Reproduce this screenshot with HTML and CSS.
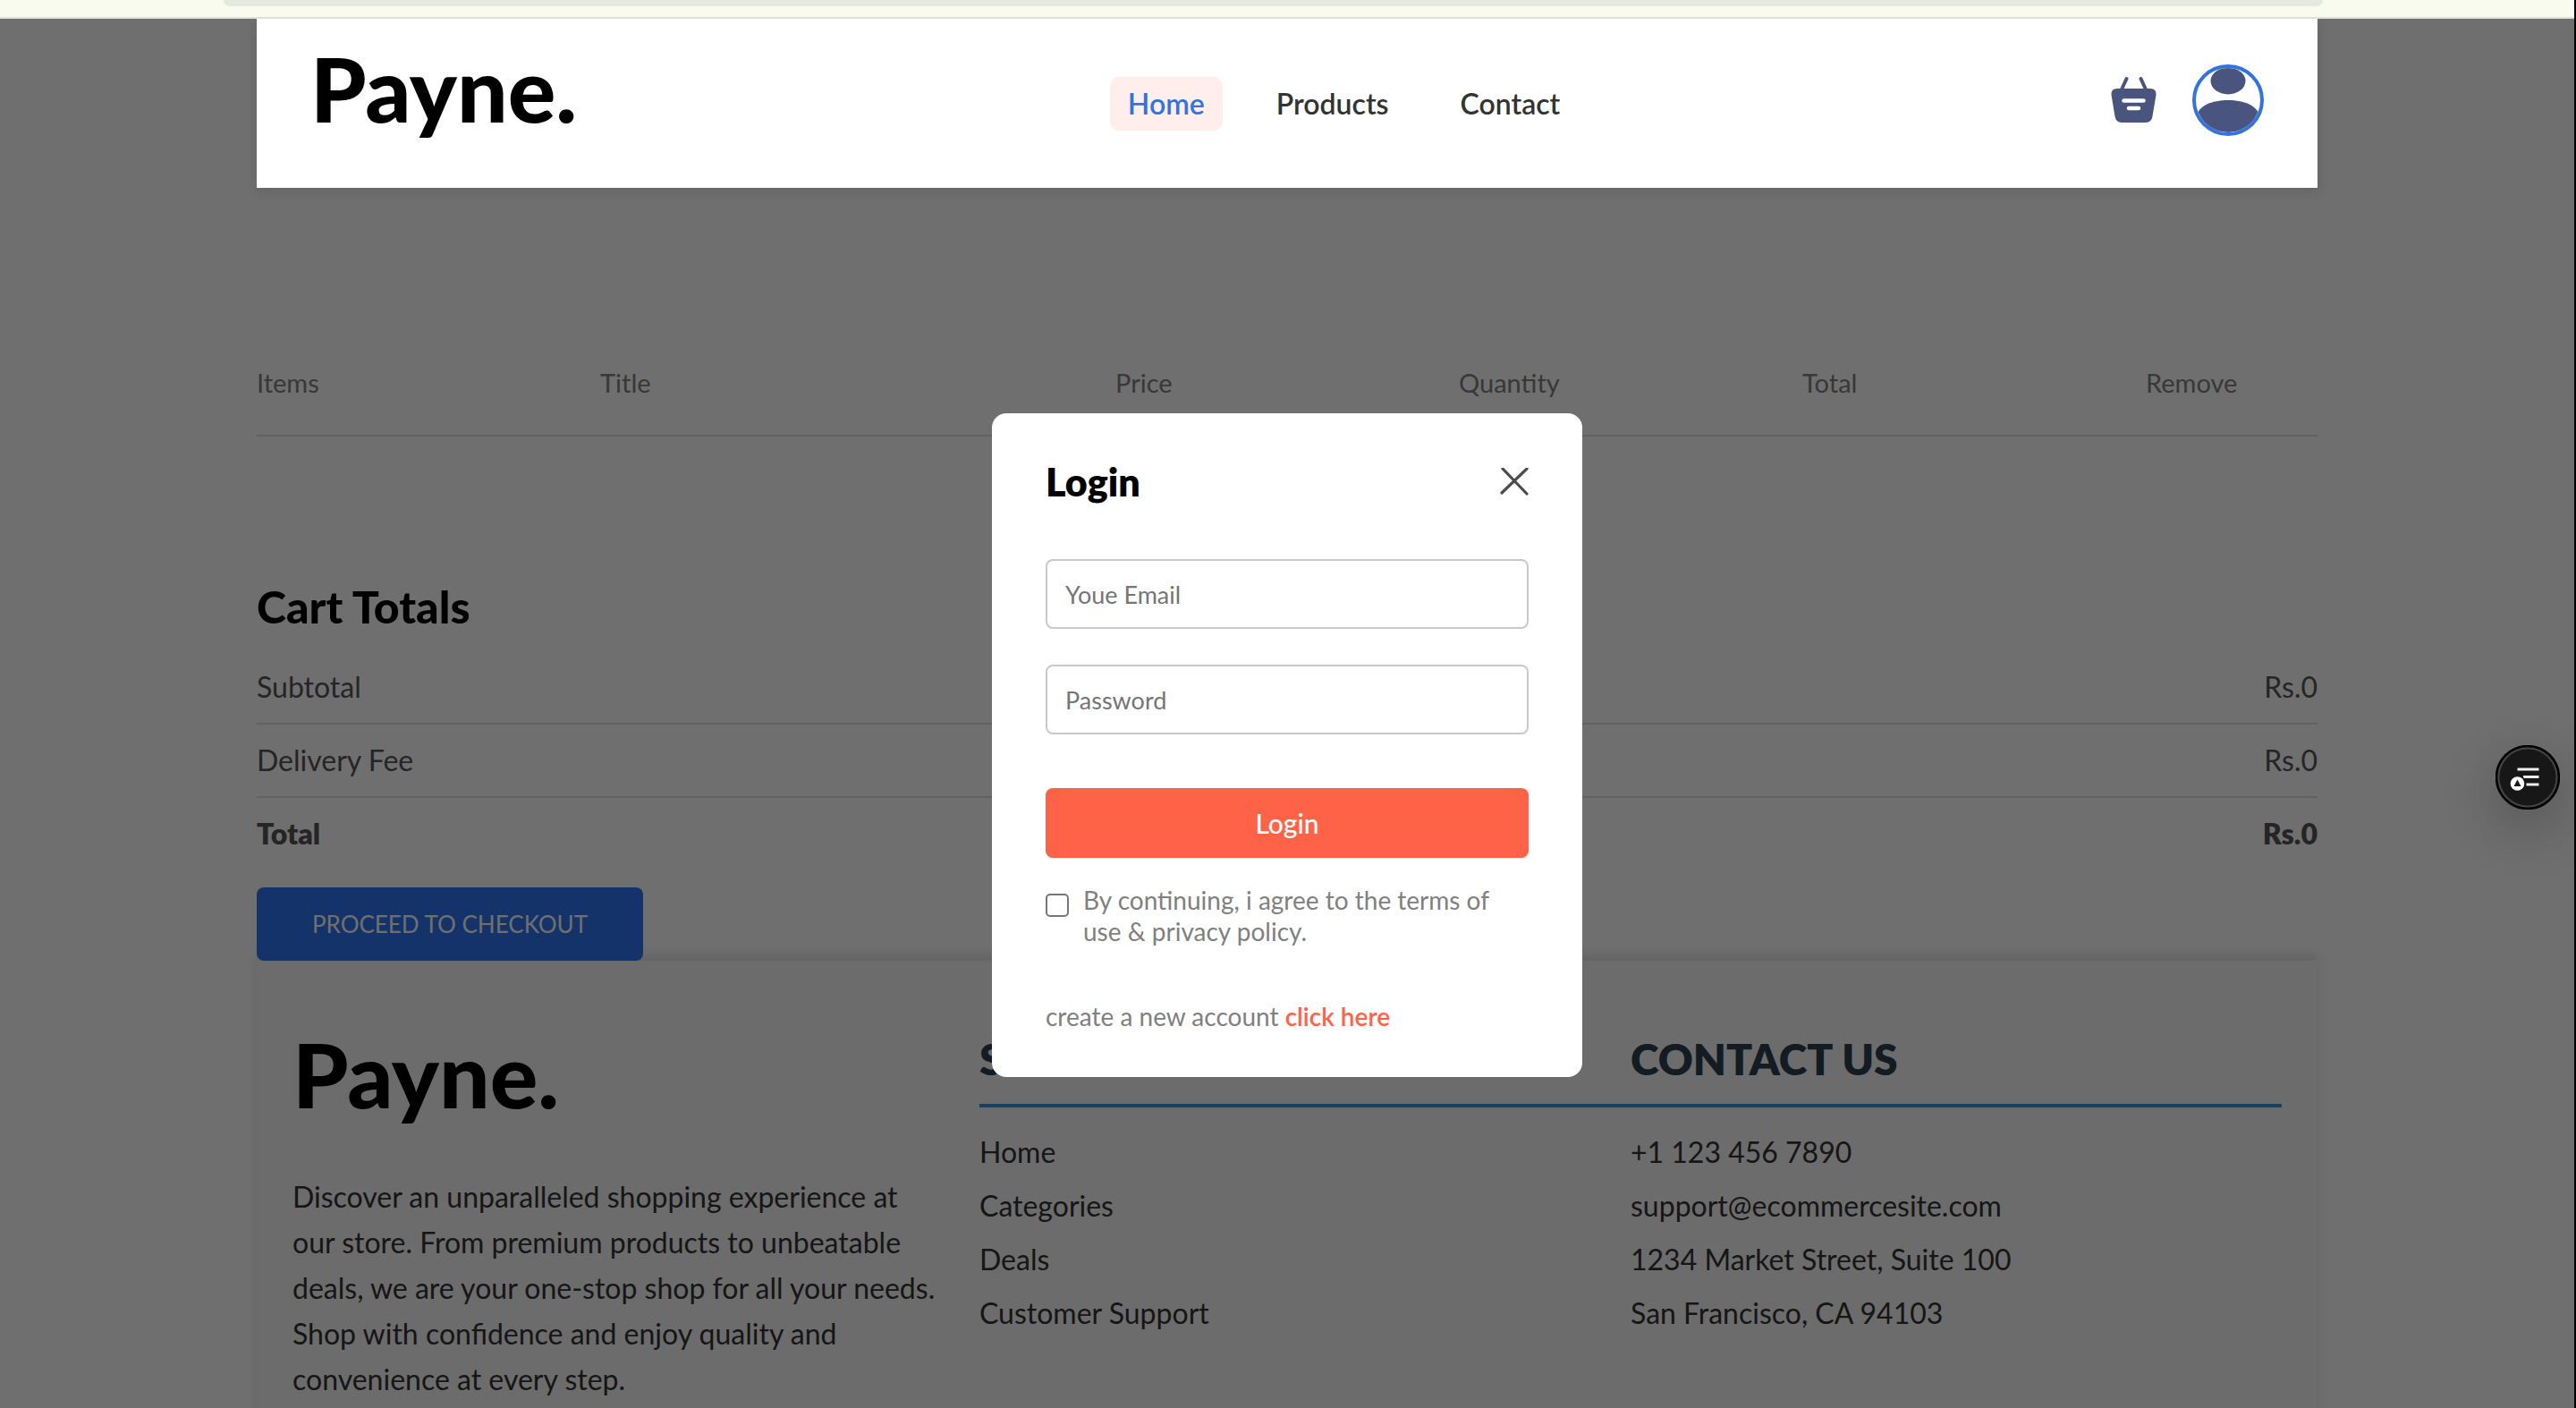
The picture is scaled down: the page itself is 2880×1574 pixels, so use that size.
FILE: index.html
```html
<!DOCTYPE html>
<html lang="en">
<head>
<meta charset="utf-8">
<title>Payne. | Cart</title>
<link rel="stylesheet" href="styles.css">
</head>
<body>
<div class="toolbar"><div class="address-bar"></div></div>

<div class="app">
  <header class="navbar page-width">
    <a class="logo" href="#">Payne.</a>
    <nav class="menu">
      <a class="menu-link active" href="#">Home</a>
      <a class="menu-link" href="#">Products</a>
      <a class="menu-link" href="#">Contact</a>
    </nav>
    <div class="navbar-actions">
      <a href="#" class="basket" aria-label="Basket">
        <svg width="51" height="52" viewBox="0 0 51 52" fill="none" stroke-linecap="round">
          <path d="M17.5 2 12 14M33.5 2 39 14" stroke="#49557e" stroke-width="4"/>
          <path d="M7 13H44Q51 13 50.500 20L46.500 44Q45.500 51 39 51H12Q5.500 51 4.500 44L.5 20Q0 13 7 13Z" fill="#49557e"/>
          <path d="M14.500 26.500H36.500M20 35H31" stroke="#fff" stroke-width="4.600"/>
        </svg>
      </a>
      <button class="avatar" type="button" aria-label="Profile">
        <svg width="72" height="72" viewBox="4 4 72 72">
          <ellipse cx="40" cy="18.500" rx="19.500" ry="15" fill="#49557e"/>
          <path d="M4 60C6 46 22 40 40 40S74 46 76 60V76H4Z" fill="#49557e"/>
        </svg>
      </button>
    </div>
  </header>

  <main class="cart page-width">
    <table class="cart-items">
      <thead>
        <tr>
          <th>Items</th><th>Title</th><th>Price</th><th>Quantity</th><th>Total</th><th>Remove</th>
        </tr>
      </thead>
    </table>
    <section class="totals">
      <h2>Cart Totals</h2>
      <div class="totals-row"><p>Subtotal</p><p>Rs.0</p></div>
      <div class="totals-row"><p>Delivery Fee</p><p>Rs.0</p></div>
      <div class="totals-row total"><b>Total</b><b>Rs.0</b></div>
      <button class="checkout" type="button">PROCEED TO CHECKOUT</button>
    </section>
  </main>

  <footer class="footer page-width">
    <div class="footer-col about">
      <a class="logo" href="#">Payne.</a>
      <p>Discover an unparalleled shopping experience at our store. From premium products to unbeatable deals, we are your one-stop shop for all your needs. Shop with confidence and enjoy quality and convenience at every step.</p>
    </div>
    <div class="footer-col">
      <h2>SHOP</h2>
      <ul>
        <li><a href="#">Home</a></li>
        <li><a href="#">Categories</a></li>
        <li><a href="#">Deals</a></li>
        <li><a href="#">Customer Support</a></li>
      </ul>
    </div>
    <div class="footer-col">
      <h2>CONTACT US</h2>
      <ul>
        <li>+1 123 456 7890</li>
        <li>support@ecommercesite.com</li>
        <li>1234 Market Street, Suite 100</li>
        <li>San Francisco, CA 94103</li>
      </ul>
    </div>
  </footer>

  <div class="overlay">
    <form class="login">
      <div class="login-title">
        <h2>Login</h2>
        <button class="close" type="button" aria-label="Close">
          <svg width="32" height="32" viewBox="0 0 32 32" stroke="#4c4c4c" stroke-width="3.200" stroke-linecap="round"><path d="M3 1 30 29M30 1 2 28"/></svg>
        </button>
      </div>
      <div class="login-inputs">
        <input class="field" type="email" placeholder="Youe Email" aria-label="Email">
        <input class="field" type="password" placeholder="Password" aria-label="Password">
      </div>
      <div class="login-submit">
        <button class="submit" type="submit">Login</button>
        <div class="terms">
          <input id="agree" type="checkbox">
          <label for="agree">By continuing, i agree to the terms of use &amp; privacy policy.</label>
        </div>
      </div>
      <p class="signup">create a new account <a href="#">click here</a></p>
    </form>
  </div>

  <button class="widget" type="button" aria-label="Reading list">
    <svg width="72" height="72" viewBox="0 0 72 72">
      <circle cx="36" cy="36" r="35" fill="#171717" stroke="#000" stroke-width="2.500"/>
      <circle cx="36" cy="36" r="32.500" fill="none" stroke="#444" stroke-width="2"/>
      <path d="M24.500 27H48.500M31 35.500H48.500M34.500 44H48.500" stroke="#eee" stroke-width="2.800"/>
      <circle cx="24.500" cy="43" r="9.500" fill="#171717"/>
      <circle cx="24.500" cy="43" r="7.800" fill="#fff"/>
      <path d="M24.500 38.500 28.500 46H20.500Z" fill="#171717"/>
    </svg>
  </button>
</div>
</body>
</html>
```
FILE: styles.css
```css
* {
  box-sizing: border-box;
  margin: 0;
  padding: 0;
}

body {
  display: flex;
  flex-direction: column;
  height: 100vh;
  overflow: hidden;
  border-right: 2px solid #000;
  background: #fff;
  font-family: Lato, "Liberation Sans", sans-serif;
  font-size: 32px;
  line-height: 40px;
}

a {
  color: inherit;
  text-decoration: none;
}

button,
input {
  font-family: inherit;
}

button {
  border: none;
  cursor: pointer;
}

svg {
  display: block;
}

.page-width {
  width: 80vw;
  margin: 0 auto;
}

/* Browser strip above the page */
.toolbar {
  flex: none;
  height: 21px;
  padding: 0 281px 0 250px;
  background: #f9fbee;
  border-bottom: 2px solid #dfe1d9;
}

.address-bar {
  height: 7px;
  background: #e3ebdf;
  border-radius: 0 0 24px 24px;
}

.app {
  position: relative;
  flex: 1;
  min-height: 0;
  overflow: hidden;
}

/* Header */
.navbar {
  position: relative;
  z-index: 2;
  display: flex;
  align-items: center;
  justify-content: space-between;
  padding: 31px 60px 30px;
  background: #fff;
  box-shadow: 0 4px 12px rgba(0, 0, 0, 0.1);
}

.logo {
  display: block;
  padding-bottom: 36px;
  color: #000;
  font-size: 100px;
  font-weight: 900;
  line-height: 92px;
}

.menu {
  display: flex;
  gap: 40px;
}

.menu-link {
  padding: 10px 20px;
  border-radius: 10px;
  color: #333;
  font-weight: 600;
}

.menu-link.active {
  background: #ffeeeb;
  color: #3273e0;
}

.navbar-actions {
  display: flex;
  align-items: center;
  gap: 40px;
  padding-bottom: 8px;
}

.avatar {
  width: 80px;
  height: 80px;
  overflow: hidden;
  background: #fff;
  border: 4px solid #3273e0;
  border-radius: 50%;
}

/* Cart */
.cart-items {
  display: block;
  margin-top: 200px;
}

.cart-items thead {
  display: block;
}

.cart-items tr {
  display: grid;
  grid-template-columns: 2fr 3fr 2fr 2fr 2fr 1fr;
  padding-bottom: 40px;
  border-bottom: 2px solid #e2e2e2;
}

.cart-items th {
  color: #808080;
  font-size: 29px;
  font-weight: 400;
  line-height: 36px;
  text-align: left;
}

.totals {
  margin-top: 160px;
}

.totals h2 {
  margin-bottom: 20px;
  color: #000;
  font-size: 50px;
  font-weight: 900;
  line-height: 60px;
}

.totals-row {
  display: flex;
  justify-content: space-between;
  padding: 20px 0;
  border-bottom: 2px solid #e2e2e2;
  color: #555;
}

.totals-row.total {
  border-bottom: none;
}

.totals-row b {
  font-weight: 800;
}

.checkout {
  position: relative;
  z-index: 1;
  display: block;
  width: 432px;
  height: 82px;
  margin-top: 20px;
  background: #2e75f4;
  border-radius: 8px;
  color: #fff;
  font-size: 26px;
}

/* Footer */
.footer {
  display: flex;
  padding: 80px 40px;
  background: #f7f7f7;
  box-shadow: 0 -8px 10px rgba(0, 0, 0, 0.1);
  color: #333;
}

.footer-col {
  flex: 1;
}

.about {
  margin-right: 40px;
}

.about p {
  margin-top: 30px;
  line-height: 51px;
}

.footer-col h2 {
  padding-bottom: 20px;
  border-bottom: 4px solid #3498db;
  color: #2c3e50;
  font-size: 48px;
  font-weight: 800;
  line-height: 60px;
}

.footer-col ul {
  display: grid;
  gap: 20px;
  margin-top: 30px;
  list-style: none;
}

/* Login dialog */
.overlay {
  position: absolute;
  inset: 0;
  z-index: 1;
  background: rgba(0, 0, 0, 0.565);
  display: flex;
  flex-direction: column;
  align-items: center;
  padding-top: 441px;
}

.login {
  display: flex;
  flex-direction: column;
  gap: 60px;
  width: 660px;
  padding: 50px 60px;
  background: #fff;
  border-radius: 16px;
  color: #808080;
  font-size: 28px;
  line-height: 35px;
}

.login-title {
  display: flex;
  align-items: center;
  justify-content: space-between;
}

.login-title h2 {
  color: #000;
  font-size: 43px;
  font-weight: 800;
  line-height: 53px;
}

.close {
  background: none;
}

.login-inputs {
  display: flex;
  flex-direction: column;
  gap: 40px;
}

.field {
  width: 100%;
  height: 78px;
  padding: 0 20px;
  background: #fff;
  border: 2px solid #c9c9c9;
  border-radius: 8px;
  font-size: 27px;
}

.field::placeholder {
  color: #757575;
}

.submit {
  display: block;
  width: 100%;
  height: 78px;
  background: #ff6347;
  border-radius: 8px;
  color: #fff;
  font-size: 30px;
  font-weight: 500;
}

.terms {
  display: flex;
  align-items: flex-start;
  gap: 16px;
  margin-top: 30px;
}

.terms input {
  appearance: none;
  flex: none;
  width: 26px;
  height: 26px;
  margin-top: 10px;
  background: #fff;
  border: 2px solid #767676;
  border-radius: 5px;
}

.signup a {
  color: #ff6347;
  font-weight: 600;
}

/* Floating widget */
.widget {
  position: absolute;
  top: 812px;
  right: 16px;
  z-index: 3;
  width: 72px;
  height: 72px;
  background: none;
  border-radius: 50%;
  box-shadow: 0 20px 60px rgba(0, 0, 0, 0.25);
}
```
